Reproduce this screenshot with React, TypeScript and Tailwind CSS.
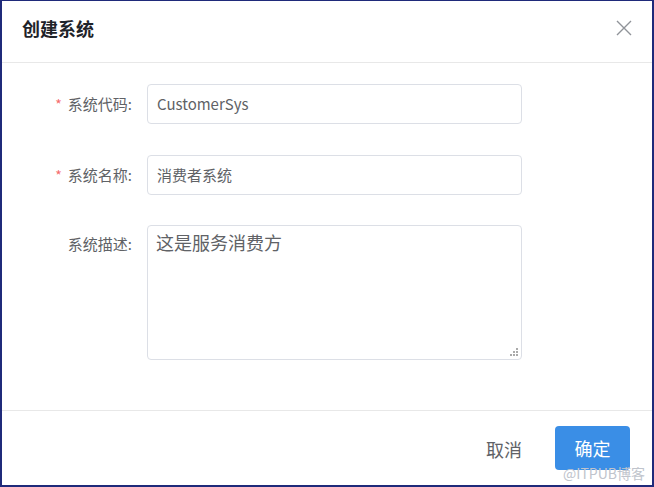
import React from "react";

const font = { fontFamily: '"Microsoft YaHei", "Noto Sans CJK SC", "Liberation Sans", sans-serif' };

function Row({ label, required, children, top }: { label: string; required?: boolean; children: React.ReactNode; top?: boolean }) {
  return (
    <div className={`flex ${top ? "items-start" : "items-center"}`}>
      <div className={`w-[145px] flex justify-end items-center pr-[15px] text-[15px] text-[#606266] ${top ? "pt-[8px]" : ""}`}>
        {required && <span className="text-[#f56c6c] mr-[6px] text-[14px]">*</span>}
        <span>{label}</span>
      </div>
      {children}
    </div>
  );
}

export default function App() {
  return (
    <div className="w-[654px] h-[487px] bg-white border-l-2 border-r-2 border-t border-b-2 border-[#1f2a7a] flex flex-col overflow-hidden relative" style={font}>
      <div className="h-[62px] flex items-center justify-between pl-[20px] pr-[20px] border-b border-[#e8e8e8]">
        <span className="text-[18px] font-bold text-[#1f2329] -mt-[7px]">创建系统</span>
        <svg width="16" height="16" viewBox="0 0 16 16" className="-mt-[7px]">
          <path d="M1 1L15 15M15 1L1 15" stroke="#909399" strokeWidth="1.4" fill="none" />
        </svg>
      </div>
      <div className="flex-1 flex flex-col pt-[21px]">
        <Row label="系统代码:" required>
          <div className="w-[375px] h-[40px] border border-[#dcdfe6] rounded-[4px] flex items-center px-[9px] text-[15px] text-[#606266]">CustomerSys</div>
        </Row>
        <div className="h-[31px]" />
        <Row label="系统名称:" required>
          <div className="w-[375px] h-[40px] border border-[#dcdfe6] rounded-[4px] flex items-center px-[9px] text-[15px] text-[#606266]">消费者系统</div>
        </Row>
        <div className="h-[30px]" />
        <Row label="系统描述:" top>
          <div className="w-[375px] h-[135px] border border-[#dcdfe6] rounded-[4px] px-[8px] pt-[3px] text-[18px] text-[#606266] relative">
            这是服务消费方
            <svg width="8" height="8" viewBox="0 0 8 8" className="absolute right-[3px] bottom-[3px]">
              <rect x="6" y="0" width="2" height="2" fill="#aaa" />
              <rect x="3" y="3" width="2" height="2" fill="#aaa" />
              <rect x="6" y="3" width="2" height="2" fill="#aaa" />
              <rect x="0" y="6" width="2" height="2" fill="#aaa" />
              <rect x="3" y="6" width="2" height="2" fill="#aaa" />
              <rect x="6" y="6" width="2" height="2" fill="#aaa" />
            </svg>
          </div>
        </Row>
      </div>
      <div className="h-[75px] border-t border-[#e8e8e8] flex items-start justify-end pr-[22px] pt-[15px]">
        <span className="text-[18px] text-[#606266] mr-[33px] mt-[10px]">取消</span>
        <div className="w-[75px] h-[44px] bg-[#3a8ee6] rounded-[4px] flex items-center justify-center text-[18px] text-white">确定</div>
      </div>
      <span className="absolute right-[7px] bottom-[5px] text-[14px] text-[#c0c4cc] leading-none">@ITPUB博客</span>
    </div>
  );
}
